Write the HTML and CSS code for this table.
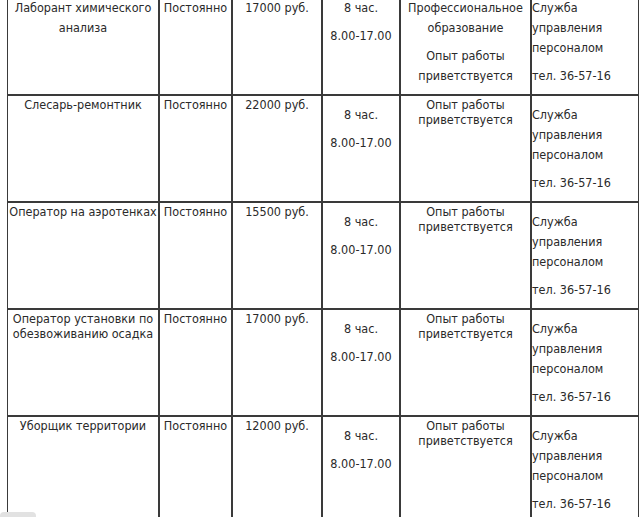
FILE: index.html
```html
<!DOCTYPE html>
<html lang="ru">
<head>
<meta charset="utf-8">
<title>Вакансии</title>
<link rel="stylesheet" href="styles.css">
</head>
<body>
<table class="jobs">
  <colgroup>
    <col class="c-name"><col class="c-type"><col class="c-pay"><col class="c-hours"><col class="c-req"><col class="c-contact">
  </colgroup>
  <tr class="first">
    <td class="center"><p>Лаборант химического анализа</p></td>
    <td class="center"><p>Постоянно</p></td>
    <td class="center"><p>17000 руб.</p></td>
    <td class="center"><p>8 час.</p><p>8.00-17.00</p></td>
    <td class="center"><p>Профессиональное образование</p><p>Опыт работы приветствуется</p></td>
    <td class="left"><p>Служба управления персоналом</p><p>тел. 36-57-16</p></td>
  </tr>
  <tr>
    <td class="center plain">Слесарь-ремонтник</td>
    <td class="center plain">Постоянно</td>
    <td class="center plain">22000 руб.</td>
    <td class="center"><p>8 час.</p><p>8.00-17.00</p></td>
    <td class="center plain">Опыт работы приветствуется</td>
    <td class="left"><p>Служба управления персоналом</p><p>тел. 36-57-16</p></td>
  </tr>
  <tr>
    <td class="center plain">Оператор на аэротенках</td>
    <td class="center plain">Постоянно</td>
    <td class="center plain">15500 руб.</td>
    <td class="center"><p>8 час.</p><p>8.00-17.00</p></td>
    <td class="center plain">Опыт работы приветствуется</td>
    <td class="left"><p>Служба управления персоналом</p><p>тел. 36-57-16</p></td>
  </tr>
  <tr>
    <td class="center plain">Оператор установки по обезвоживанию осадка</td>
    <td class="center plain">Постоянно</td>
    <td class="center plain">17000 руб.</td>
    <td class="center"><p>8 час.</p><p>8.00-17.00</p></td>
    <td class="center plain">Опыт работы приветствуется</td>
    <td class="left"><p>Служба управления персоналом</p><p>тел. 36-57-16</p></td>
  </tr>
  <tr>
    <td class="center plain">Уборщик территории</td>
    <td class="center plain">Постоянно</td>
    <td class="center plain">12000 руб.</td>
    <td class="center"><p>8 час.</p><p>8.00-17.00</p></td>
    <td class="center plain">Опыт работы приветствуется</td>
    <td class="left"><p>Служба управления персоналом</p><p>тел. 36-57-16</p></td>
  </tr>
</table>
<div class="corner"></div>
</body>
</html>
```

FILE: styles.css
```css
html, body {
  margin: 0;
  padding: 0;
  background: #ffffff;
  overflow: hidden;
}
body {
  font-family: "DejaVu Sans Condensed", "DejaVu Sans", Verdana, sans-serif;
  font-stretch: semi-condensed;
  font-size: 12.5px;
  color: #2a2a2a;
}
.jobs {
  table-layout: fixed;
  width: 632px;
  margin: -12px 0 0 7px;
  border-collapse: separate;
  border-spacing: 0;
}
.c-name { width: 152px; }
.c-type { width: 73px; }
.c-pay { width: 90px; }
.c-hours { width: 78px; }
.c-req { width: 131px; }
.c-contact { width: 108px; }
.jobs td {
  border: 1px solid #3a3a3a;
  padding: 1px 1px 0;
  vertical-align: top;
  line-height: 20px;
}
.jobs td.plain {
  line-height: 15px;
}
.jobs td.center { text-align: center; }
.jobs td.left { text-align: left; padding-left: 0; }
.jobs p {
  margin: 8px 0;
}
.corner {
  position: fixed;
  left: 0;
  bottom: -4px;
  width: 36px;
  height: 9px;
  background: #e2e2e2;
  border-radius: 4px;
}
```
